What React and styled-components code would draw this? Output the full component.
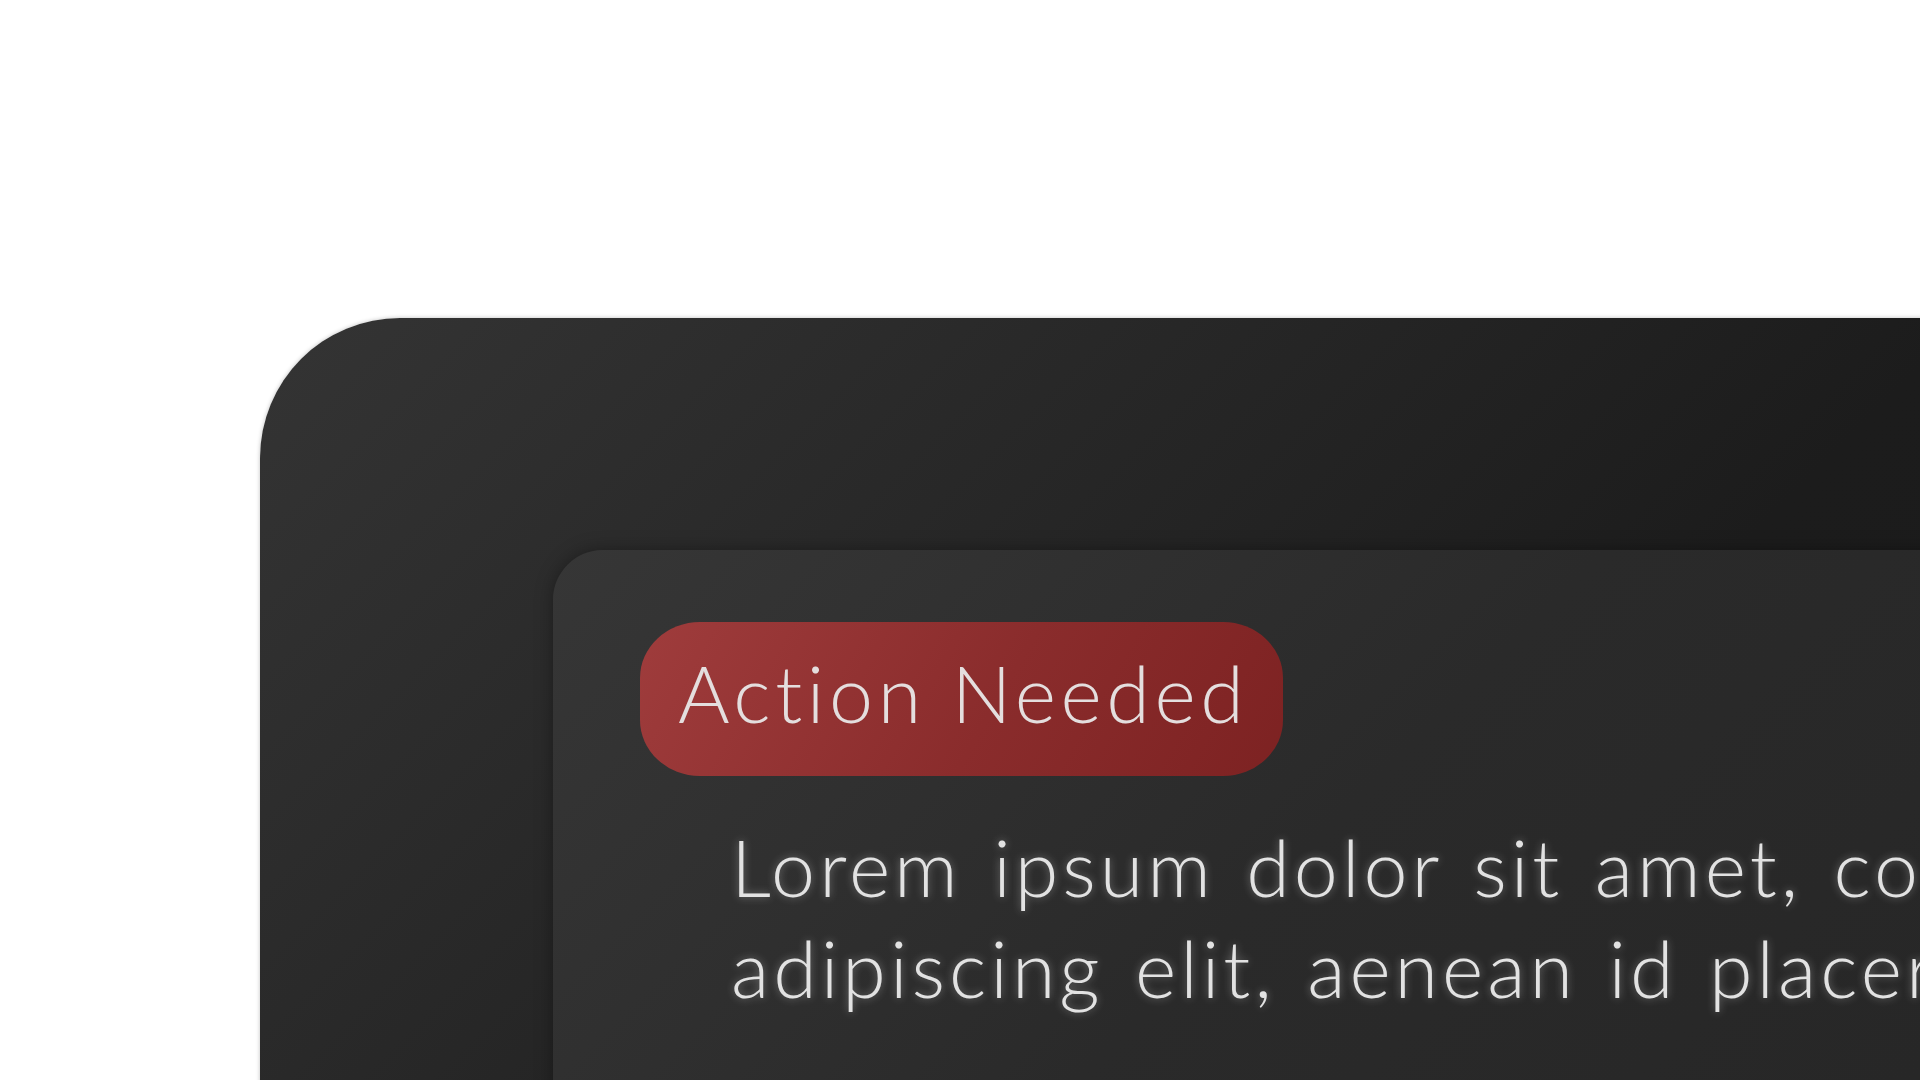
import React from 'react';
import styled, { createGlobalStyle } from 'styled-components';

const GlobalStyle = createGlobalStyle`
  html, body {
    margin: 0;
    padding: 0;
    background: #ffffff;
    overflow: hidden;
    width: 1920px;
    height: 1080px;
  }
  body {
    font-family: Lato, "Open Sans", sans-serif;
  }
`;

const Page = styled.div`
  padding: 318px 0 0 260px;
  width: 1920px;
  height: 1080px;
  box-sizing: border-box;
`;

const Shell = styled.div`
  width: 2400px;
  min-height: 1400px;
  box-sizing: border-box;
  padding: 232px 0 0 293px;
  border-radius: 140px;
  background: linear-gradient(135deg, #343434 0%, #1c1c1c 45%, #191919 100%);
  box-shadow: 0 0 4px rgba(0, 0, 0, 0.25);
`;

const Card = styled.section`
  min-height: 900px;
  box-sizing: border-box;
  padding: 72px 0 0 87px;
  border-radius: 50px;
  background: linear-gradient(135deg, #363636 0%, #2a2a2a 35%, #232323 100%);
  box-shadow: 0 0 18px rgba(0, 0, 0, 0.35);
`;

const Badge = styled.div`
  display: inline-flex;
  align-items: center;
  height: 154px;
  box-sizing: border-box;
  padding: 0 35px 14px 38px;
  border-radius: 60px / 56px;
  background: linear-gradient(120deg, #9f3c3c 0%, #8a2c2c 55%, #7d2222 100%);
  color: #e4dede;
  font-size: 79px;
  font-weight: 300;
  letter-spacing: 4.6px;
  line-height: 1;
`;

const Body = styled.p`
  margin: 40px 0 0 91px;
  width: 2000px;
  color: #e2e2e2;
  font-size: 79px;
  font-weight: 300;
  line-height: 101px;
  letter-spacing: 4px;
  word-spacing: 6px;
  text-shadow: 0 0 8px rgba(255, 255, 255, 0.35);
`;

export default function App() {
  return (
    <>
      <GlobalStyle />
      <Page>
        <Shell>
          <Card>
            <Badge>Action Needed</Badge>
            <Body>
              Lorem ipsum dolor sit amet, consectetur
              <br />
              adipiscing elit, aenean id placerat nibh.
            </Body>
          </Card>
        </Shell>
      </Page>
    </>
  );
}
